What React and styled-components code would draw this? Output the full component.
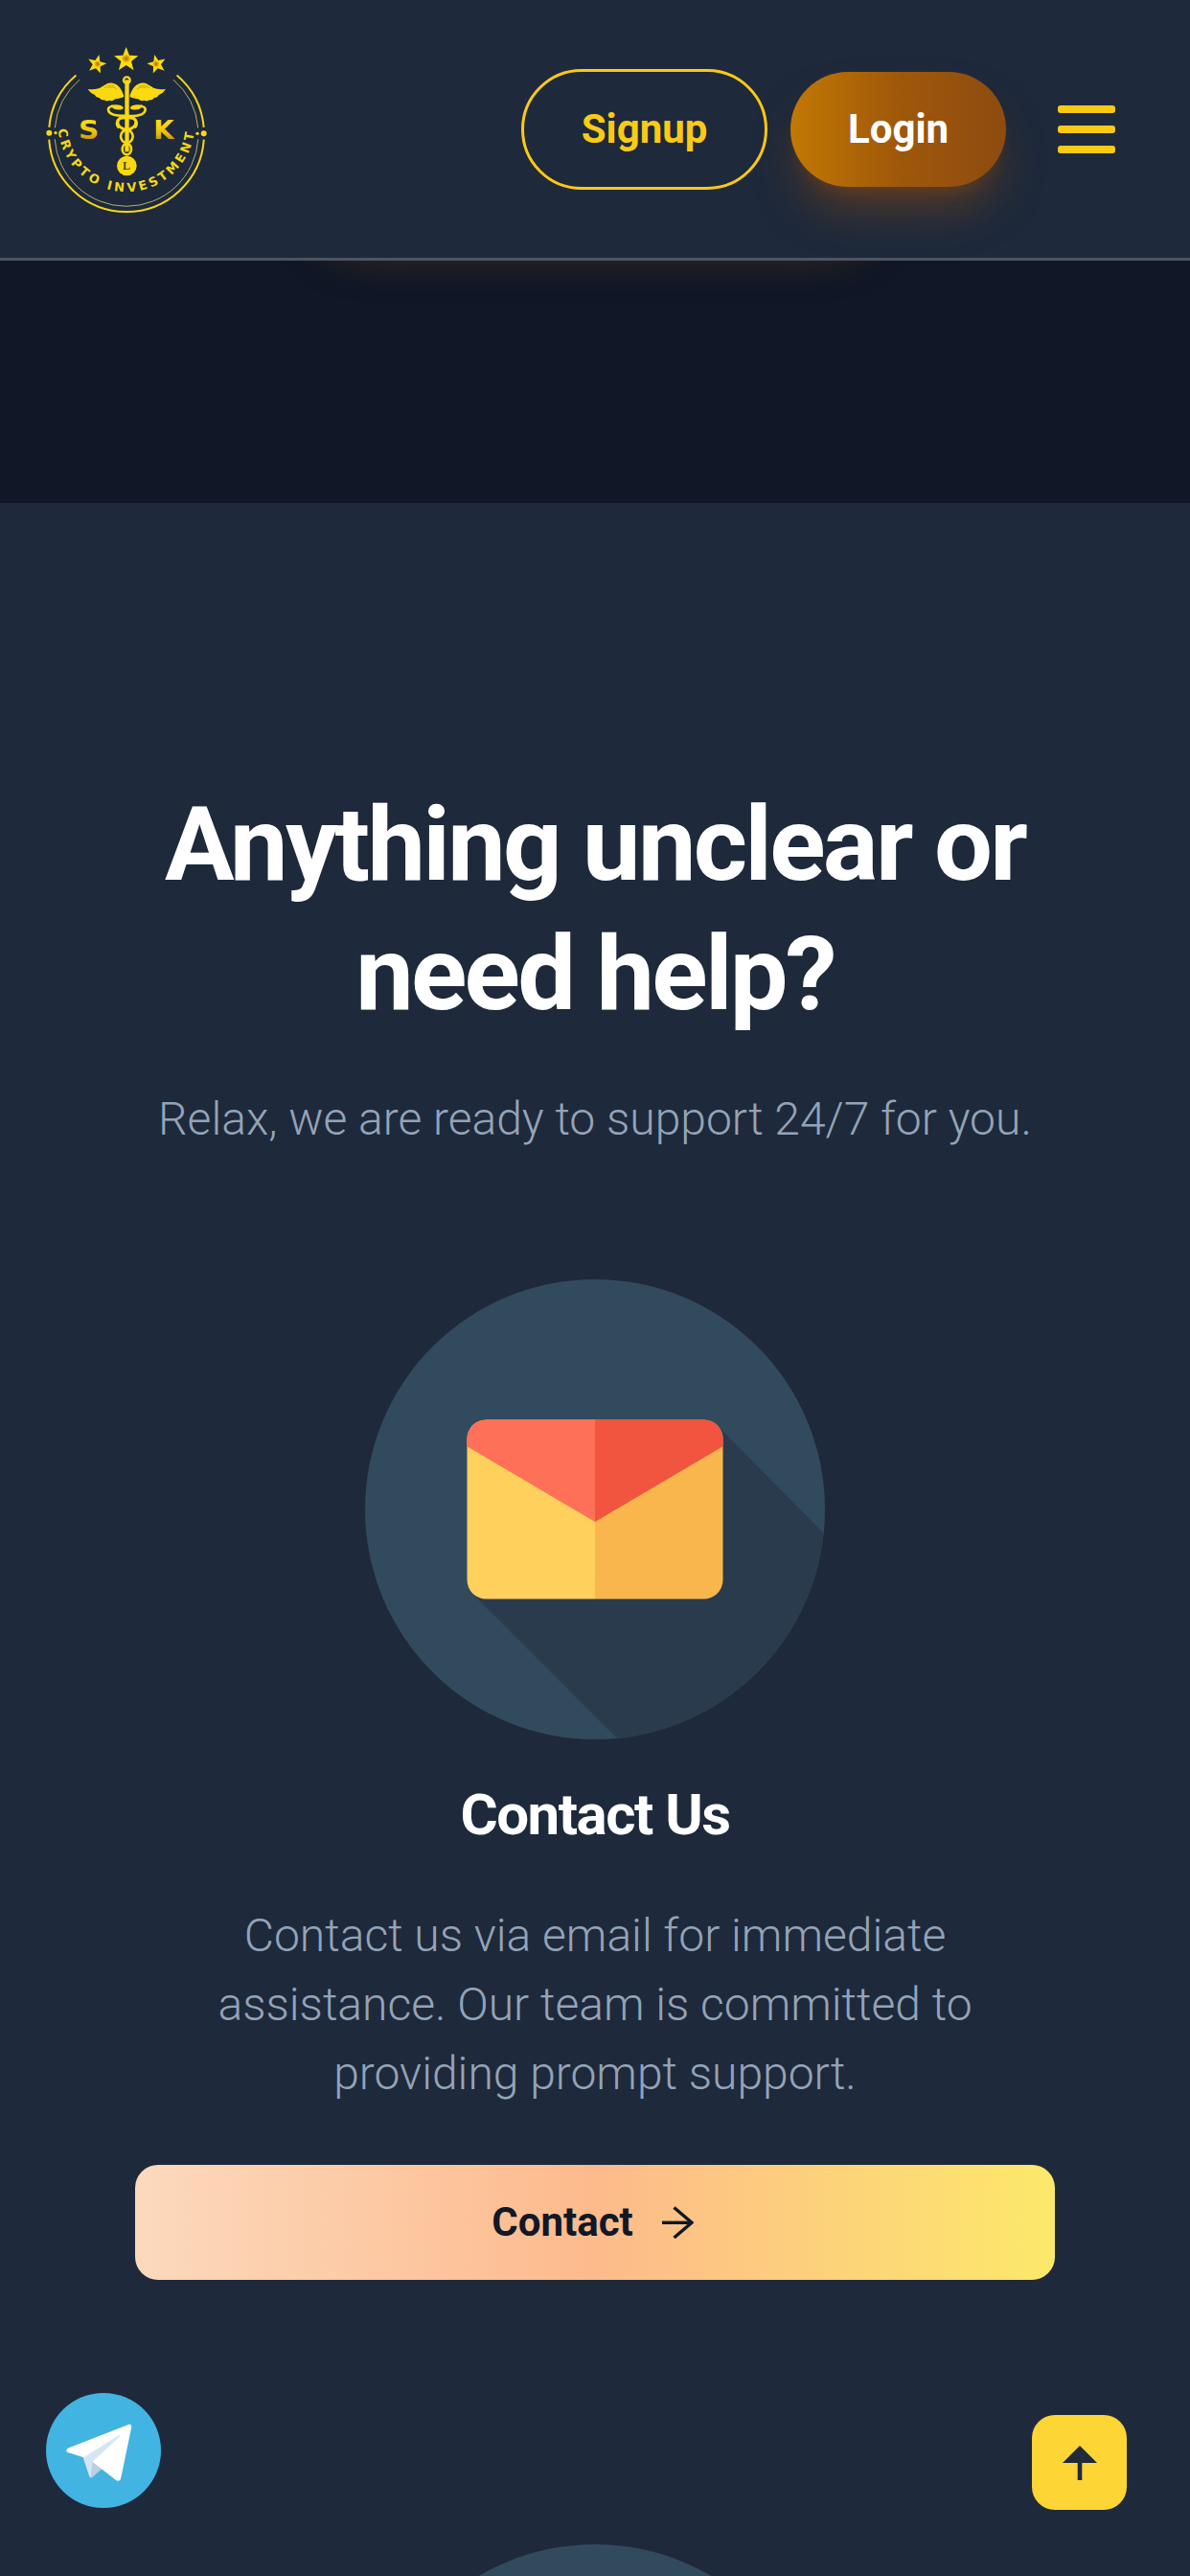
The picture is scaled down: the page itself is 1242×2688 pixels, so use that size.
import React from "react";
import styled, { createGlobalStyle } from "styled-components";

const Global = createGlobalStyle`
  *, *::before, *::after { box-sizing: border-box; }
  body {
    margin: 0;
    background: #1e293b;
    font-family: Roboto, "Liberation Sans", sans-serif;
    -webkit-font-smoothing: antialiased;
  }
  h2, h3, p { margin: 0; }
  svg { display: block; flex: none; }
`;

const Page = styled.div`
  width: 100%;
  height: 2688px;
  overflow: hidden;
  background: #1e293b;
`;

const Header = styled.header`
  position: relative;
  z-index: 2;
  display: flex;
  align-items: center;
  height: 272px;
  padding: 0 78px 0 48px;
  background: #1e293b;
  border-bottom: 3px solid #4b5563;
`;

const Actions = styled.nav`
  display: flex;
  align-items: center;
  gap: 24px;
  margin-left: auto;
`;

const PillButton = styled.button`
  display: flex;
  align-items: center;
  justify-content: center;
  height: ${(p) => (p.$filled ? "120px" : "126px")};
  width: ${(p) => (p.$filled ? "225px" : "257px")};
  padding: 0;
  border: ${(p) => (p.$filled ? "0" : "3px solid #faca15")};
  border-radius: 63px;
  background: ${(p) =>
    p.$filled ? "linear-gradient(90deg, #c27803, #9f580a 50%, #8e4b10)" : "transparent"};
  box-shadow: ${(p) =>
    p.$filled
      ? "0 30px 45px -9px rgba(142, 75, 16, 0.5), 0 12px 18px -12px rgba(142, 75, 16, 0.5)"
      : "none"};
  color: ${(p) => (p.$filled ? "#fff" : "#faca15")};
  font: 700 42px/60px Roboto, "Liberation Sans", sans-serif;
`;

const MenuButton = styled.button`
  display: flex;
  flex-direction: column;
  gap: 13px;
  width: 60px;
  margin-left: 54px;
  padding: 0;
  border: 0;
  background: none;
`;

const MenuBar = styled.span`
  height: 8px;
  border-radius: 3px;
  background: #faca15;
`;

const Band = styled.section`
  display: flex;
  justify-content: center;
  height: 253px;
  background: #101726;
`;

const BandGlow = styled.div`
  width: 600px;
  height: 120px;
  margin-top: -151px;
  border-radius: 60px;
  box-shadow: 0 30px 45px -9px rgba(142, 75, 16, 0.5);
`;

const Support = styled.section`
  display: flex;
  flex-direction: column;
  align-items: center;
  padding: 289px 141px 0;
  text-align: center;
`;

const Title = styled.h2`
  color: #fff;
  font-size: 108px;
  font-weight: 700;
  line-height: 135px;
  letter-spacing: -0.025em;
`;

const Copy = styled.p`
  margin-top: ${(p) => p.$gap}px;
  color: #94a3b8;
  font-size: 48px;
  font-weight: 300;
  line-height: 72px;
  white-space: nowrap;
`;

const Card = styled.article`
  display: flex;
  flex-direction: column;
  align-items: center;
  width: 100%;
  margin-top: ${(p) => p.$gap}px;
`;

const CardTitle = styled.h3`
  margin-top: 41px;
  color: #fff;
  font-size: 60px;
  font-weight: 700;
  line-height: 75px;
  letter-spacing: -0.025em;
`;

const ContactButton = styled.button`
  display: flex;
  align-items: center;
  justify-content: center;
  gap: 30px;
  width: 960px;
  height: 120px;
  margin-top: 59px;
  padding: 0 5px 0 0;
  border: 0;
  border-radius: 24px;
  background: linear-gradient(90deg, #fcd9bd, #fdba8c 50%, #fce96a);
  color: #111827;
  font: 700 42px/60px Roboto, "Liberation Sans", sans-serif;
`;

const TelegramLink = styled.div`
  position: fixed;
  left: 48px;
  top: 2497px;
`;

const TopButton = styled.button`
  position: fixed;
  left: 1077px;
  top: 2520px;
  display: grid;
  place-items: center;
  width: 99px;
  height: 99px;
  padding: 0;
  border: 0;
  border-radius: 24px;
  background: #fdd535;
`;

const star = (cx, cy, r, rot) =>
  Array.from({ length: 10 }, (_, i) => {
    const a = ((rot - 90 + i * 36) * Math.PI) / 180;
    const q = i % 2 ? r * 0.42 : r;
    return `${(cx + q * Math.cos(a)).toFixed(1)},${(cy + q * Math.sin(a)).toFixed(1)}`;
  }).join(" ");

const STARS = [
  [183, 79, 31, 14],
  [275, 65, 40, 0],
  [371, 79, 31, -14],
];

const polar = (r, deg) => {
  const a = (deg * Math.PI) / 180;
  return `${(276 + r * Math.cos(a)).toFixed(1)} ${(298 + r * Math.sin(a)).toFixed(1)}`;
};
const arc = (r, from, to, sweep = 1) => `M${polar(r, from)}A${r} ${r} 0 0 ${sweep} ${polar(r, to)}`;
const rings = (r) => [arc(r, 185, 229.5), arc(r, 310.5, 355), arc(r, 4, 176)].join("");

function Logo() {
  const wing =
    "M268 180c-5-20-16-38-35-42-14-3-22 4-33 11-12 9-27 10-45 8 6 9 13 15 22 18 2 6 8 9 14 9 3 5 9 8 15 7 5 4 11 4 16 1 7 3 14 1 19-4 10-2 18-2 27-8z";
  return (
    <svg width="168" height="174" viewBox="24 22 504 522" fill="none">
      <defs>
        <linearGradient id="gold" x1="0" y1="0" x2="0" y2="1">
          <stop offset="0.3" stopColor="#ffd90b" />
          <stop offset="0.65" stopColor="#e6b80c" />
          <stop offset="0.95" stopColor="#a97a14" />
        </linearGradient>
        <radialGradient id="starGold">
          <stop offset="0" stopColor="#b06c08" />
          <stop offset="0.22" stopColor="#e0a40a" />
          <stop offset="0.38" stopColor="#fbdc0e" />
        </radialGradient>
        <path id="ringText" d={arc(214, 184, -5, 0)} />
      </defs>
      {STARS.map(([x, y, r, rot]) => (
        <polygon key={x} points={star(x, y, r, rot)} fill="url(#starGold)" />
      ))}
      <path d={rings(243)} stroke="#f5d712" strokeWidth="6" />
      <path d={rings(225)} stroke="#b3b06a" strokeWidth="3" />
      <g fill="#f9d90f">
        <circle cx="34" cy="294" r="9" />
        <circle cx="54" cy="294" r="5" />
        <circle cx="518" cy="296" r="9" />
        <circle cx="498" cy="296" r="5" />
        <path d={wing} />
        <path d={wing} transform="matrix(-1 0 0 1 554 0)" />
        <path d="M271 128h13v225h-13z" />
        <circle cx="277" cy="397" r="31" />
      </g>
      <g stroke="#a88f18" strokeWidth="2" strokeLinecap="round">
        <path d="M207 153c10-7 21-10 31-5M218 153c9-4 18-3 26 3M347 153c-10-7-21-10-31-5M336 153c-9-4-18-3-26 3" />
      </g>
      <g stroke="#f9d90f" strokeLinecap="round">
        <circle cx="277" cy="129" r="10" strokeWidth="7" />
        <path
          strokeWidth="8"
          d="M260 213c-15-6-42-4-41 8 2 20 35 19 58 20s56 0 58-20c1-12-26-14-41-8M231 210c9 8 20 9 31 6M323 210c-9 8-20 9-31 6"
        />
        <path strokeWidth="9" d="M277 241c-38 2-38 36 0 44c38-8 38-42 0-44z" />
        <path strokeWidth="8" d="M250 276c-10-16 0-30 24-29M304 276c10-16 0-30-24-29" />
        <ellipse cx="277" cy="305" rx="19" ry="20" strokeWidth="8" />
        <ellipse cx="277" cy="345" rx="14" ry="17" strokeWidth="8" />
      </g>
      <text x="264" y="410" fill="#4b4a26" fontFamily="Liberation Serif, serif" fontWeight="700" fontSize="36">
        L
      </text>
      <g fill="url(#gold)" fontFamily="DejaVu Sans, sans-serif" fontWeight="700" fontSize="77">
        <text x="126" y="312" textLength="64" lengthAdjust="spacingAndGlyphs">S</text>
        <text x="361" y="312" textLength="64" lengthAdjust="spacingAndGlyphs">K</text>
      </g>
      <text fill="#f3d714" fontFamily="DejaVu Sans, sans-serif" fontWeight="700" fontSize="39" letterSpacing="9.6">
        <textPath href="#ringText">CRYPTO INVESTMENT</textPath>
      </text>
    </svg>
  );
}

function Disc({ mail }) {
  return (
    <svg width="480" height="480" viewBox="0 0 480 480">
      <defs>
        <clipPath id="discClip">
          <circle cx="240" cy="240" r="240" />
        </clipPath>
        <clipPath id="mailClip">
          <rect x="106.5" y="146.500" width="267" height="187" rx="20" />
        </clipPath>
      </defs>
      <circle cx="240" cy="240" r="240" fill="#324a5e" />
      {mail && (
        <>
          <path d="M112 328l152 152h216V266L368 153z" fill="#2b3b4e" clipPath="url(#discClip)" />
          <g clipPath="url(#mailClip)">
            <path d="M106 146h134v188H106z" fill="#ffd15c" />
            <path d="M240 146h134v188H240z" fill="#f8b64c" />
            <path d="M106 146h134v107L106 174z" fill="#ff7058" />
            <path d="M374 146H240v107L374 174z" fill="#f1543f" />
          </g>
        </>
      )}
    </svg>
  );
}

export default function App() {
  return (
    <Page>
      <Global />
      <Header>
        <Logo />
        <Actions>
          <PillButton>Signup</PillButton>
          <PillButton $filled>Login</PillButton>
        </Actions>
        <MenuButton aria-label="Menu">
          <MenuBar />
          <MenuBar />
          <MenuBar />
        </MenuButton>
      </Header>
      <Band>
        <BandGlow />
      </Band>
      <Support>
        <Title>
          Anything unclear or
          <br />
          need help?
        </Title>
        <Copy $gap={48}>Relax, we are ready to support 24/7 for you.</Copy>
        <Card $gap={131}>
          <Disc mail />
          <CardTitle>Contact Us</CardTitle>
          <Copy $gap={53}>
            Contact us via email for immediate
            <br />
            assistance. Our team is committed to
            <br />
            providing prompt support.
          </Copy>
          <ContactButton>
            Contact
            <svg width="33" height="34" viewBox="0 0 33 34" fill="none" stroke="#111827">
              <path d="M0 17.300h31" strokeWidth="3.400" />
              <path d="M12.500 1.500 31 17.300 12.500 33" strokeWidth="3.400" />
            </svg>
          </ContactButton>
        </Card>
        <Card $gap={276}>
          <Disc />
        </Card>
      </Support>
      <TelegramLink>
        <svg width="120" height="120" viewBox="24 21 360 360">
          <circle cx="204" cy="201" r="180" fill="#41b4e1" />
          <path d="M140 222l22 62q3 5 8 0l30-26 56-104z" fill="#b8cfe4" />
          <path d="M140 222l20 61 4 3 5-50 90-82-20-6z" fill="#d4e6f3" />
          <path
            d="M92 194L282 120q10-3 10 7L258 290q-4 9-14 5L169 236l86-79q3-4-2-4L142 223 92 207q-8-5 0-13z"
            fill="#fff"
          />
        </svg>
      </TelegramLink>
      <TopButton aria-label="Back to top">
        <svg width="36" height="36" viewBox="0 0 36 36" fill="#1f2a3b">
          <path d="M18 0l18 18H20.300v18h-4.600V18H0z" />
        </svg>
      </TopButton>
    </Page>
  );
}
